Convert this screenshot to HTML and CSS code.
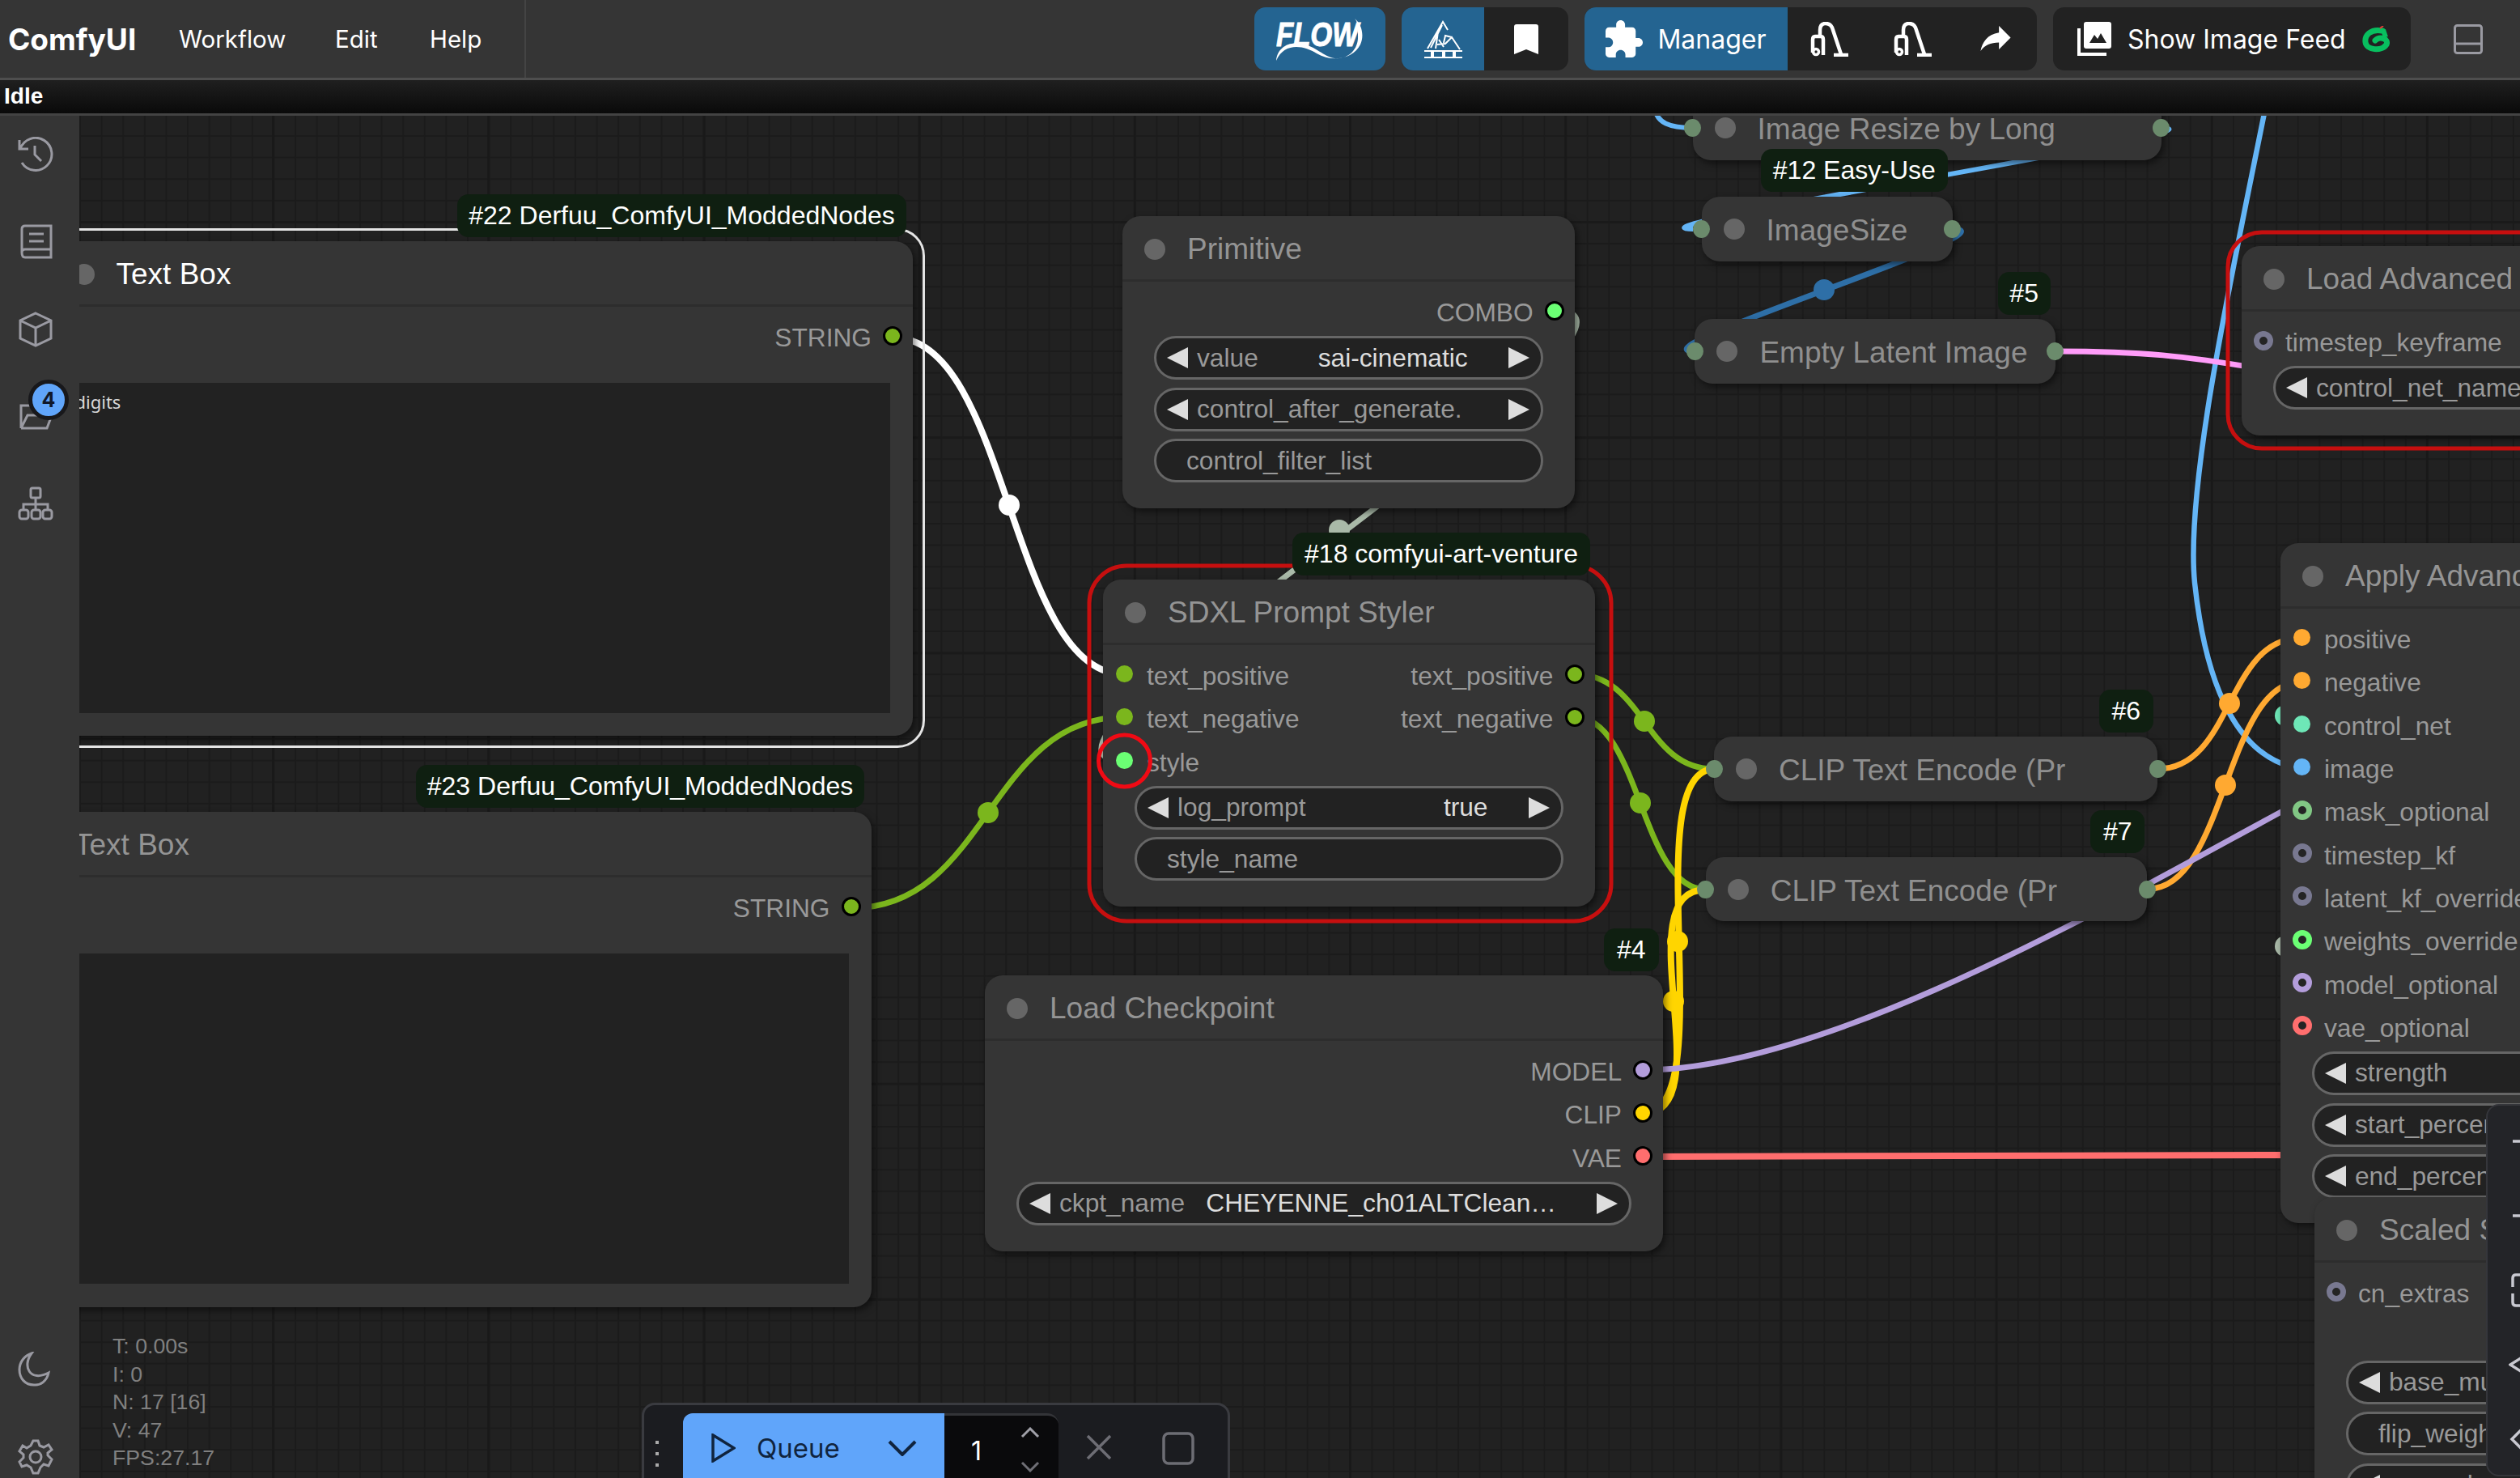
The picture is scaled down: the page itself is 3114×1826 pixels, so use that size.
FILE: index.html
```html
<!DOCTYPE html>
<html lang="en">
<head>
<meta charset="utf-8">
<title>ComfyUI</title>
<link rel="stylesheet" href="styles.css">
</head>
<body>
<div class="app">
  <header class="topbar">
    <div class="brandzone">
      <span class="brand">ComfyUI</span>
      <nav class="menu"><span>Workflow</span><span>Edit</span><span>Help</span></nav>
    </div>
    <div class="actions">
      <div class="grp g-flow blue">
        <svg width="108" height="53" viewBox="0 0 108 53"><text x="0" y="35" class="flowtext" textLength="102" lengthAdjust="spacingAndGlyphs">FLOW</text><path fill="#fff" d="M0 53C1 38 14 29 30 32C50 35 58 48 72 50C90 52 102 38 101 22C101 12 101 5 97 1C106 8 109 22 104 33C96 50 70 56 50 44C34 34 10 30 0 53Z"/></svg>
      </div>
      <div class="grp g-two">
        <div class="cell blue c102">
          <svg width="47" height="47" viewBox="0 0 47 47" fill="none" stroke="#fff" stroke-width="2"><path d="M4 35L23 2L29 12M22 6L8 34M17 14L14 35M24 33L18 24M16 30L26 29L34 21L44 36M34 21L26 19L24 28"/><path d="M0 38H47M0 46H47" stroke-width="2"/><path d="M10 38V46M24 38V46M37 38V46" stroke-width="4"/></svg>
        </div>
        <div class="cell c104">
          <svg width="30" height="37" viewBox="0 0 30 37"><path fill="#fff" d="M3 0H27Q30 0 30 3V37L15 31L0 37V3Q0 0 3 0Z"/></svg>
        </div>
      </div>
      <div class="grp g-three">
        <div class="cell blue manager">
          <svg width="46" height="46" viewBox="2 1 21 21"><path fill="#fff" d="M20.5 11H19V7c0-1.1-.9-2-2-2h-4V3.500C13 2.120 11.880 1 10.500 1S8 2.120 8 3.500V5H4c-1.100 0-1.990.9-1.990 2v3.800H3.500c1.490 0 2.700 1.210 2.700 2.700s-1.210 2.700-2.700 2.700H2V20c0 1.100.9 2 2 2h3.800v-1.500c0-1.490 1.210-2.700 2.700-2.700 1.490 0 2.700 1.210 2.700 2.700V22H17c1.100 0 2-.9 2-2v-4h1.500c1.380 0 2.500-1.120 2.500-2.500S21.880 11 20.500 11z"/></svg>
          <span class="btxt">Manager</span>
        </div>
        <div class="cell c103">
          <svg width="47" height="43" viewBox="0 0 47 43" fill="none" stroke="#fff" stroke-width="4.500"><path d="M3 38V22Q3 18 6 18H13Q16 18 16 22V41"/><path d="M12 18V10Q12 2 19 2Q26 2 28 10L38 40"/><path d="M29 41H47" stroke-width="4.500"/><circle cx="7" cy="37" r="3.500" stroke-width="3.500"/></svg>
        </div>
        <div class="cell c103">
          <svg width="47" height="43" viewBox="0 0 47 43" fill="none" stroke="#fff" stroke-width="4.500"><path d="M3 38V22Q3 18 6 18H13Q16 18 16 22V41"/><path d="M12 18V10Q12 2 19 2Q26 2 28 10L38 40"/><path d="M29 41H47" stroke-width="4.500"/><circle cx="7" cy="37" r="3.500" stroke-width="3.500"/></svg>
        </div>
        <div class="cell c102">
          <svg width="38" height="32" viewBox="3 5 18 15.500"><path fill="#fff" d="M14 9V5l7 7-7 7v-4.100c-5 0-8.500 1.600-11 5.100 1-5 4-10 11-11z"/></svg>
        </div>
      </div>
      <div class="grp g-feed">
        <svg width="42" height="42" viewBox="0 0 42 42"><rect x="8" width="34" height="33" rx="3" fill="#fff"/><path fill="#222" d="M15 26L21 16L25 21L29 14L36 26Z"/><path fill="none" stroke="#fff" stroke-width="4" d="M2 8V40H36"/></svg>
        <span class="btxt">Show Image Feed</span>
        <svg width="34" height="33" viewBox="0 0 34 33" fill="none"><path stroke="#08bf5f" stroke-width="7" stroke-linecap="round" d="M25 6C10 3 3 12 4 20C5 30 24 32 30 23C33 16 22 12 16 18"/><path stroke="#08bf5f" stroke-width="6" d="M26 5L29 14"/><path stroke="#e53935" stroke-width="2" d="M22 3L26 0"/></svg>
      </div>
      <svg class="panelbtn" width="36" height="37" viewBox="0 0 36 37" fill="none" stroke="#9a9aa2" stroke-width="3"><rect x="1.500" y="1.500" width="33" height="34" rx="3"/><path d="M1.500 24H34.500"/></svg>
    </div>
  </header>
  <div class="statusbar"><b>Idle</b></div>
  <main class="workspace">
    <aside class="sidebar">
      <svg class="sideicon" viewBox="0 0 44 44" fill="none"><path d="M2 4V15H13M3 15A20 20 0 1 1 5 32M21 11V22L29 30"/></svg>
      <svg class="sideicon" viewBox="0 0 44 44" fill="none"><path d="M5 35V6Q5 2 9 2H41V41H9Q5 41 5 35Q5 31 9 31H41M14 12H32M14 21H32"/></svg>
      <svg class="sideicon" viewBox="0 0 44 44" fill="none"><path d="M22 2L41 11V33L22 42L3 33V11ZM3 11L22 20L41 11M22 20V42"/></svg>
      <div class="folderwrap">
        <svg class="sideicon" viewBox="0 0 44 44" fill="none"><path d="M4 36V8H17L23 14H37V19M4 36H36L42 20H12L4 36"/></svg>
        <span class="countbadge">4</span>
      </div>
      <svg class="sideicon" viewBox="0 0 44 44" fill="none"><rect x="16" y="2" width="12" height="12" rx="2"/><rect x="2" y="29" width="11" height="11" rx="3"/><rect x="17" y="29" width="11" height="11" rx="3"/><rect x="31" y="29" width="11" height="11" rx="3"/><path d="M22 14V29M7 29V22H37V29"/></svg>
      <div class="sidespace"></div>
      <svg class="sideicon" viewBox="0 0 44 44" fill="none"><path d="M17 2C5 18 15 38 38 26C36 36 28 42 20 41C9 41 2 33 2 22C2 13 8 5 17 2Z"/></svg>
      <svg class="sideicon" viewBox="0 0 44 44" fill="none"><circle cx="22" cy="22" r="7"/><path d="M19 2H25L27 8L32 10L38 7L42 13L37 17V20L42 25L38 33L32 31L28 35L25 42H19L16 35L11 32L5 34L2 28L7 23V19L2 15L6 8L11 11L16 8Z"/></svg>
    </aside>
    <section class="canvas">
      <svg class="links" width="3016" height="1683" viewBox="98 143 3016 1683" fill="none">
        <g stroke-width="7">
          <path stroke="#a9b9a8" d="M1920 383C2120 383 1190 940 1389 940"/>
          <circle cx="1655" cy="655" r="13" fill="#a9b9a8" stroke="none"/>
          <path stroke="#64b5f6" stroke-width="6" d="M2092 158C2060 158 2050 150 2046 139"/>
          <path stroke="#64b5f6" stroke-width="6" d="M2670 158C2780 158 1980 283 2092 283"/>
          <path stroke="#2e6fa7" d="M2413 283C2500 283 2010 434 2094 434"/>
          <circle cx="2254" cy="358" r="13" fill="#2e6fa7" stroke="none"/>
          <path stroke="#64b5f6" stroke-width="6.500" d="M2800 130C2760 330 2700 600 2712 720C2727 860 2770 930 2830 947"/>
          <path stroke="#ff9cf9" d="M2540 434C2650 434 2700 440 2790 455"/>
          <path stroke="#fff" stroke-width="8" d="M1104 417C1247 417 1247 833 1389 833"/>
          <circle cx="1247" cy="624" r="13" fill="#fff" stroke="none"/>
          <path stroke="#7bb61d" d="M1052 1122C1221 1122 1221 886 1389 886"/>
          <circle cx="1221" cy="1004" r="13" fill="#7bb61d" stroke="none"/>
          <path stroke="#7bb61d" d="M1946 833C2032 833 2032 950 2118 950"/>
          <circle cx="2032" cy="891" r="13" fill="#7bb61d" stroke="none"/>
          <path stroke="#7bb61d" d="M1946 886C2027 886 2027 1099 2108 1099"/>
          <circle cx="2027" cy="992" r="13" fill="#7bb61d" stroke="none"/>
          <path stroke="#ffd500" stroke-width="8" d="M2030 1376C2130 1376 2020 952 2118 950"/>
          <path stroke="#ffd500" stroke-width="8" d="M2030 1376C2130 1376 2006 1099 2108 1099"/>
          <circle cx="2073" cy="1163" r="13" fill="#ffd500" stroke="none"/>
          <circle cx="2068" cy="1237" r="13" fill="#ffd500" stroke="none"/>
          <path stroke="#ffa931" d="M2666 950C2760 950 2750 788 2844 788"/>
          <circle cx="2755" cy="869" r="13" fill="#ffa931" stroke="none"/>
          <path stroke="#ffa931" d="M2655 1098C2750 1098 2750 842 2844 842"/>
          <circle cx="2750" cy="970" r="13" fill="#ffa931" stroke="none"/>
          <path stroke="#b39ddb" d="M2030 1322C2260 1322 2620 1110 2830 997"/>
          <path stroke="#ff6e6e" stroke-width="8" d="M2030 1429L2830 1427"/>
          <circle cx="2824" cy="884" r="13" fill="#6ee7b7" stroke="none"/>
          <circle cx="2824" cy="1169" r="13" fill="#a9b9a8" stroke="none"/>
        </g>
      </svg>

      <article class="node n22 selected">
        <div class="title light"><i class="tdot"></i>Text Box</div>
        <div class="row"><span class="slot-out"><span class="lbl">STRING</span><i class="dot out c-green"></i></span></div>
        <div class="textarea"><span>digits</span></div>
      </article>

      <article class="node n23">
        <div class="title"><i class="tdot"></i>Text Box</div>
        <div class="row"><span class="slot-out"><span class="lbl">STRING</span><i class="dot out c-green"></i></span></div>
        <div class="textarea"></div>
      </article>

      <article class="node nprim">
        <div class="title"><i class="tdot"></i>Primitive</div>
        <div class="row"><span class="slot-out"><span class="lbl">COMBO</span><i class="dot out c-combo"></i></span></div>
        <div class="widgets">
          <div class="widget"><i class="tri-l"></i><span class="wl">value</span><span class="wv">sai-cinematic</span><i class="tri-r"></i></div>
          <div class="widget"><i class="tri-l"></i><span class="wl">control_after_generate.</span><span class="wv"></span><i class="tri-r"></i></div>
          <div class="widget plain"><span>control_filter_list</span></div>
        </div>
      </article>

      <article class="node nsdxl">
        <div class="title"><i class="tdot"></i>SDXL Prompt Styler</div>
        <div class="row"><span class="slot-in"><i class="dot c-green"></i><span class="lbl">text_positive</span></span><span class="slot-out"><span class="lbl">text_positive</span><i class="dot out c-green"></i></span></div>
        <div class="row"><span class="slot-in"><i class="dot c-green"></i><span class="lbl">text_negative</span></span><span class="slot-out"><span class="lbl">text_negative</span><i class="dot out c-green"></i></span></div>
        <div class="row"><span class="slot-in"><i class="dot c-combo"></i><span class="lbl">style</span></span></div>
        <div class="widgets">
          <div class="widget"><i class="tri-l"></i><span class="wl">log_prompt</span><span class="wv">true</span><i class="tri-r"></i></div>
          <div class="widget plain"><span>style_name</span></div>
        </div>
      </article>

      <article class="node nckpt">
        <div class="title"><i class="tdot"></i>Load Checkpoint</div>
        <div class="row"><span class="slot-out"><span class="lbl">MODEL</span><i class="dot out c-model"></i></span></div>
        <div class="row"><span class="slot-out"><span class="lbl">CLIP</span><i class="dot out c-clip"></i></span></div>
        <div class="row"><span class="slot-out"><span class="lbl">VAE</span><i class="dot out c-vae"></i></span></div>
        <div class="widgets">
          <div class="widget"><i class="tri-l"></i><span class="wl">ckpt_name</span><span class="wv">CHEYENNE_ch01ALTClean…</span><i class="tri-r"></i></div>
        </div>
      </article>

      <article class="node collapsed nresize"><i class="edge e-l"></i><i class="tdot"></i><span>Image Resize by Long</span><i class="edge e-r"></i></article>
      <article class="node collapsed nsize"><i class="edge e-l"></i><i class="tdot"></i><span>ImageSize</span><i class="edge e-r"></i></article>
      <article class="node collapsed nlatent"><i class="edge e-l"></i><i class="tdot"></i><span>Empty Latent Image</span><i class="edge e-r"></i></article>
      <article class="node collapsed nclip6"><i class="edge e-l"></i><i class="tdot"></i><span>CLIP Text Encode (Pr</span><i class="edge e-r"></i></article>
      <article class="node collapsed nclip7"><i class="edge e-l"></i><i class="tdot"></i><span>CLIP Text Encode (Pr</span><i class="edge e-r"></i></article>

      <article class="node nadv">
        <div class="title"><i class="tdot"></i>Load Advanced ControlNet Model</div>
        <div class="row"><span class="slot-in"><i class="dot ring c-slate"></i><span class="lbl">timestep_keyframe</span></span></div>
        <div class="widgets">
          <div class="widget"><i class="tri-l"></i><span class="wl">control_net_name</span></div>
        </div>
      </article>

      <article class="node napply">
        <div class="title"><i class="tdot"></i>Apply Advanced ControlNet</div>
        <div class="row"><span class="slot-in"><i class="dot c-cond"></i><span class="lbl">positive</span></span></div>
        <div class="row"><span class="slot-in"><i class="dot c-cond"></i><span class="lbl">negative</span></span></div>
        <div class="row"><span class="slot-in"><i class="dot c-teal"></i><span class="lbl">control_net</span></span></div>
        <div class="row"><span class="slot-in"><i class="dot c-image"></i><span class="lbl">image</span></span></div>
        <div class="row"><span class="slot-in"><i class="dot ring c-mask"></i><span class="lbl">mask_optional</span></span></div>
        <div class="row"><span class="slot-in"><i class="dot ring c-slate"></i><span class="lbl">timestep_kf</span></span></div>
        <div class="row"><span class="slot-in"><i class="dot ring c-slate"></i><span class="lbl">latent_kf_override</span></span></div>
        <div class="row"><span class="slot-in"><i class="dot ring c-combo"></i><span class="lbl">weights_override</span></span></div>
        <div class="row"><span class="slot-in"><i class="dot ring c-model"></i><span class="lbl">model_optional</span></span></div>
        <div class="row"><span class="slot-in"><i class="dot ring c-vae"></i><span class="lbl">vae_optional</span></span></div>
        <div class="widgets">
          <div class="widget"><i class="tri-l"></i><span class="wl">strength</span></div>
          <div class="widget"><i class="tri-l"></i><span class="wl">start_percent</span></div>
          <div class="widget"><i class="tri-l"></i><span class="wl">end_percent</span></div>
        </div>
      </article>

      <article class="node nscaled">
        <div class="title"><i class="tdot"></i>Scaled Soft Weights</div>
        <div class="row"><span class="slot-in"><i class="dot ring c-slate"></i><span class="lbl">cn_extras</span></span></div>
        <div class="row"></div>
        <div class="widgets">
          <div class="widget"><i class="tri-l"></i><span class="wl">base_multiplier</span></div>
          <div class="widget plain"><span>flip_weights</span></div>
          <div class="widget"><i class="tri-l"></i><span class="wl">uncond_multiplier</span></div>
        </div>
      </article>

      <svg class="frames" width="3016" height="1683" viewBox="98 143 3016 1683" fill="none">
        <rect x="1346" y="699" width="645" height="439" rx="46" stroke="#c60f0f" stroke-width="5"/>
        <rect x="2753" y="287" width="500" height="267" rx="42" stroke="#c60f0f" stroke-width="5"/>
        <circle cx="1389.500" cy="940" r="32" stroke="#f00a14" stroke-width="5"/>
      </svg>

      <span class="badge b22">#22 Derfuu_ComfyUI_ModdedNodes</span>
      <span class="badge b23">#23 Derfuu_ComfyUI_ModdedNodes</span>
      <span class="badge b18">#18 comfyui-art-venture</span>
      <span class="badge b12">#12 Easy-Use</span>
      <span class="badge b5">#5</span>
      <span class="badge b6">#6</span>
      <span class="badge b7">#7</span>
      <span class="badge b4">#4</span>

      <div class="stats"><div>T: 0.00s</div><div>I: 0</div><div>N: 17 [16]</div><div>V: 47</div><div>FPS:27.17</div></div>

      <div class="queuebar">
        <svg class="grip" width="6" height="34" viewBox="0 0 6 34"><rect x="1" y="0" width="4" height="4" fill="#aaa"/><rect x="1" y="14" width="4" height="4" fill="#aaa"/><rect x="1" y="28" width="4" height="4" fill="#aaa"/></svg>
        <div class="queuebtn">
          <svg width="30" height="36" viewBox="0 0 30 36" fill="none" stroke="#10243e" stroke-width="3.500"><path d="M2 2L28 18L2 34Z"/></svg>
          <span>Queue</span>
          <svg class="qchev" width="36" height="20" viewBox="0 0 36 20" fill="none" stroke="#10243e" stroke-width="4"><path d="M2 2L18 18L34 2"/></svg>
        </div>
        <div class="qcount">
          <span>1</span>
          <div class="qspin">
            <svg width="24" height="14" viewBox="0 0 24 14" fill="none" stroke="#a0a0a8" stroke-width="3"><path d="M2 12L12 2L22 12"/></svg>
            <svg width="24" height="14" viewBox="0 0 24 14" fill="none" stroke="#6f6f76" stroke-width="3"><path d="M2 2L12 12L22 2"/></svg>
          </div>
        </div>
        <svg class="qx" width="34" height="34" viewBox="0 0 34 34" fill="none" stroke="#6d6d74" stroke-width="3.500"><path d="M3 3L31 31M31 3L3 31"/></svg>
        <svg class="qsq" width="40" height="41" viewBox="0 0 40 41" fill="none" stroke="#6d6d74" stroke-width="3.500"><rect x="2" y="2" width="36" height="37" rx="6"/></svg>
      </div>

      <div class="canvasmenu">
        <svg width="48" height="48" viewBox="0 0 48 48" fill="none"><path d="M5 24H48M26 4V44"/></svg>
        <svg width="48" height="48" viewBox="0 0 48 48" fill="none"><path d="M5 24H48"/></svg>
        <svg width="48" height="48" viewBox="0 0 48 48" fill="none"><path d="M5 20V9Q5 5 9 5H20M5 28V39Q5 43 9 43H20"/></svg>
        <svg width="48" height="48" viewBox="0 0 48 48" fill="none"><path d="M18 14L2 24L18 34"/></svg>
        <svg width="48" height="48" viewBox="0 0 48 48" fill="none"><path d="M20 8L4 24L20 40"/></svg>
      </div>
    </section>
  </main>
</div>
</body>
</html>
```
FILE: styles.css
```css
* { box-sizing: border-box; }
html, body { margin: 0; height: 100%; background: #202020; overflow: hidden; }
body { font-family: "Liberation Sans", Arial, sans-serif; }
i { display: block; font-style: normal; }
.app { width: 3114px; height: 1826px; display: flex; flex-direction: column; }

/* top bar */
.topbar { height: 99px; flex: none; display: flex; align-items: stretch; background: #353535; border-bottom: 3px solid #4e4e4e; color: #fff; font-family: Inter, "Liberation Sans", sans-serif; }
.brandzone { width: 650px; flex: none; display: flex; align-items: center; padding-left: 10px; border-right: 2px solid #444; }
.brand { font-weight: 700; font-size: 37px; width: 211px; }
.menu { display: flex; font-size: 29.500px; }
.menu span:nth-child(1) { width: 193px; }
.menu span:nth-child(2) { width: 117px; }
.actions { flex: 1; display: flex; align-items: center; justify-content: flex-end; gap: 20px; padding-right: 46px; }
.grp { height: 78px; border-radius: 14px; background: #222; display: flex; align-items: center; overflow: hidden; }
.blue { background: #246491; }
.g-flow { width: 162px; justify-content: center; }
.cell { height: 100%; display: flex; align-items: center; justify-content: center; flex: none; }
.c102 { width: 102px; }
.c103 { width: 103px; }
.c104 { width: 104px; }
.manager { width: 251px; gap: 18px; }
.btxt { font-size: 32px; }
.flowtext { font: italic 900 42px "Liberation Sans", sans-serif; fill: #fff; stroke: #fff; stroke-width: 1; }
.g-feed { width: 442px; padding-left: 30px; gap: 20px; }
.panelbtn { margin-left: 33px; }

/* status */
.statusbar { height: 41px; flex: none; padding: 0 0 2px 5px; display: flex; align-items: center; color: #fff; font-size: 28px; background: linear-gradient(#1f1f1f, #0a0a0a); }
.statusbar b { font-family: "Liberation Sans", sans-serif; }

.workspace { flex: 1; min-height: 0; display: flex; border-top: 3px solid #434343; }

/* sidebar */
.sidebar { width: 98px; flex: none; background: #353535; display: flex; flex-direction: column; align-items: center; padding: 26px 10px 4px 0; gap: 64px; position: relative; z-index: 6; }
.sideicon { width: 44px; height: 44px; stroke: #9a9aa2; stroke-width: 3; flex: none; display: block; }
.sidespace { flex: 1; }
.folderwrap { position: relative; height: 44px; }
.countbadge { position: absolute; left: 13px; top: -24px; width: 50px; height: 50px; border-radius: 50%; background: #60a5fa; border: 5px solid #18181b; color: #10182a; font: 700 25px/40px Inter, sans-serif; text-align: center; }

/* canvas */
.canvas { flex: 1; position: relative; overflow: hidden; background-color: #212121;
  background-image: linear-gradient(90deg, #191919 3px, transparent 3px), linear-gradient(#1a1a1a 3px, transparent 3px), linear-gradient(90deg, #1b1b1b 2px, transparent 2px), linear-gradient(#1b1b1b 2px, transparent 2px);
  background-size: 266.2px 266.2px, 266.2px 266.2px, 26.62px 26.62px, 26.62px 26.62px;
  background-position: 238px 0, 0 130px, 0 0, 0 24px; }
.links, .frames { position: absolute; left: 0; top: 0; display: block; pointer-events: none; }
.links { z-index: 0; }
.frames { z-index: 2; }

/* nodes */
.node { position: absolute; z-index: 1; background: #353535; border-radius: 22px; box-shadow: 3px 4px 8px rgba(0,0,0,.5); color: #999; }
.title { height: 81px; display: flex; align-items: center; padding: 4px 0 0 27px; gap: 27px; font-size: 37px; color: #949494; border-bottom: 3px solid #2d2d2d; white-space: nowrap; overflow: hidden; }
.title.light { color: #fff; }
.tdot { width: 26px; height: 26px; border-radius: 50%; background: #666; flex: none; }
.row { height: 53.3px; display: flex; align-items: center; font-size: 31.7px; white-space: nowrap; }
.title + .row { margin-top: 9px; }
.slot-in { display: flex; align-items: center; padding-left: 16px; gap: 17px; }
.slot-out { display: flex; align-items: center; margin-left: auto; padding-right: 13px; gap: 14px; }
.lbl { padding-top: 6px; }
.dot { width: 21px; height: 21px; border-radius: 50%; flex: none; background: var(--c); }
.dot.out { width: 24px; height: 24px; border: 3px solid #000; }
.dot.ring { width: 24px; height: 24px; margin-left: -1.5px; margin-right: -1.5px; background: #242424; border: 7.500px solid var(--c); }
.c-green { --c: #7bb61d; }
.c-combo { --c: #6bff74; }
.c-model { --c: #b39ddb; }
.c-clip { --c: #ffd500; }
.c-vae { --c: #ff6e6e; }
.c-cond { --c: #ffa931; }
.c-teal { --c: #6ee7b7; }
.c-image { --c: #64b5f6; }
.c-mask { --c: #81c784; }
.c-slate { --c: #787890; }

.widgets { padding-top: 5px; display: flex; flex-direction: column; gap: 9.600px; }
.widget { height: 54px; margin: 0 39px; padding: 0 14px 0 13px; border: 3px solid #666; border-radius: 27px; background: #222; display: flex; align-items: center; font-size: 31.7px; white-space: nowrap; color: #999; }
.widget.plain { padding-left: 37px; }
.tri-l { width: 0; height: 0; flex: none; border-style: solid; border-width: 13px 26px 13px 0; border-color: transparent #ddd transparent transparent; }
.tri-r { width: 0; height: 0; flex: none; border-style: solid; border-width: 13px 0 13px 26px; border-color: transparent transparent transparent #ddd; }
.wl { margin-left: 11px; }
.wv { margin-left: auto; margin-right: 50px; color: #ddd; }

.textarea { background: #222; height: 408px; margin: 32px 28px 0 18px; padding: 7px 0 0 11px; color: #d8d8d8; font: 22px/32px "Noto Sans", sans-serif; }

.n22 { left: -34.5px; top: 155px; width: 1064.5px; height: 611px; }
.n22::before { content: ""; position: absolute; left: -14px; right: -15px; top: -16px; bottom: -15px; border: 3px solid #e4e4e4; border-radius: 34px; pointer-events: none; }
.n23 { left: -86px; top: 860px; width: 1064.5px; height: 612px; }
.nprim { left: 1289px; top: 124px; width: 558.6px; height: 361px; }
.nsdxl { left: 1265px; top: 573px; width: 607.5px; height: 404px; }
.nckpt { left: 1119px; top: 1062px; width: 838px; height: 341px; }
.nadv { left: 2672px; top: 161px; width: 600px; height: 234px; }
.napply { left: 2720px; top: 528px; width: 600px; height: 840px; }
.nscaled { left: 2762px; top: 1336px; width: 600px; height: 520px; }

.collapsed { height: 80px; display: flex; align-items: center; padding-left: 27px; gap: 27px; font-size: 37px; color: #8f8f8f; white-space: nowrap; }
.collapsed span { overflow: hidden; padding-top: 4px; }
.edge { position: absolute; top: 29px; width: 21px; height: 22px; border-radius: 50%; background: #6b8b6c; }
.e-l { left: -10.5px; }
.e-r { right: -10.5px; }
.nresize { left: 1993.6px; top: -25.3px; width: 579.4px; }
.nsize { left: 2004.6px; top: 99.7px; width: 310.4px; }
.nlatent { left: 1996.4px; top: 251px; width: 445.6px; }
.nclip6 { left: 2020px; top: 767px; width: 548.4px; }
.nclip7 { left: 2009.7px; top: 916.4px; width: 545.7px; height: 79px; }

/* id badges */
.badge { position: absolute; z-index: 3; height: 53px; border-radius: 14px; background: #0f1f11; color: #fff; font-size: 32px; line-height: 53px; text-align: center; white-space: nowrap; }
.b22 { left: 467px; top: 97px; width: 555px; }
.b23 { left: 416px; top: 802px; width: 554px; }
.b18 { left: 1499px; top: 515px; width: 368px; }
.b12 { left: 2077.6px; top: 41px; width: 231.4px; }
.b5 { left: 2370.5px; top: 193px; width: 65.3px; }
.b6 { left: 2496px; top: 709px; width: 66.5px; }
.b7 { left: 2485.4px; top: 857.5px; width: 66.6px; }
.b4 { left: 1884px; top: 1004px; width: 67.6px; }

.stats { position: absolute; left: 41px; top: 1503px; z-index: 3; color: #808080; font-size: 26.7px; line-height: 34.500px; }

/* queue */
.queuebar { position: absolute; z-index: 4; left: 695px; top: 1590px; width: 727px; height: 120px; padding: 10px 0 0 13px; background: #1b1c20; border: 3px solid #3a3b40; border-radius: 16px; display: flex; align-items: flex-start; }
.grip { margin-top: 34px; flex: none; }
.queuebtn { width: 323px; height: 100px; flex: none; margin-left: 29px; border-radius: 12px 0 0 0; background: #60a5fa; color: #10243e; display: flex; align-items: center; padding: 0 0 14px 35px; gap: 26px; font: 33px Inter, sans-serif; }
.qchev { margin-left: auto; margin-right: 34px; }
.qcount { width: 141px; height: 100px; flex: none; background: #0a0a0c; border-top: 3px solid #333438; border-top-right-radius: 14px; display: flex; color: #fff; font: 32px Inter, sans-serif; }
.qcount span { width: 86px; padding: 24px 0 0 33px; }
.qspin { display: flex; flex-direction: column; padding: 14px 0 0 8px; gap: 28px; }
.qx { margin: 25px 0 0 33px; flex: none; }
.qsq { margin: 23px 0 0 61px; flex: none; }

/* canvas menu */
.canvasmenu { position: absolute; z-index: 4; left: 2973.7px; top: 1221px; width: 120px; height: 460px; padding: 20px 0 0 26px; background: #232428; border: 2px solid #35363b; border-radius: 16px; display: flex; flex-direction: column; gap: 44px; }
.canvasmenu svg { stroke: #c8c8d0; stroke-width: 3.500; flex: none; display: block; }
```
